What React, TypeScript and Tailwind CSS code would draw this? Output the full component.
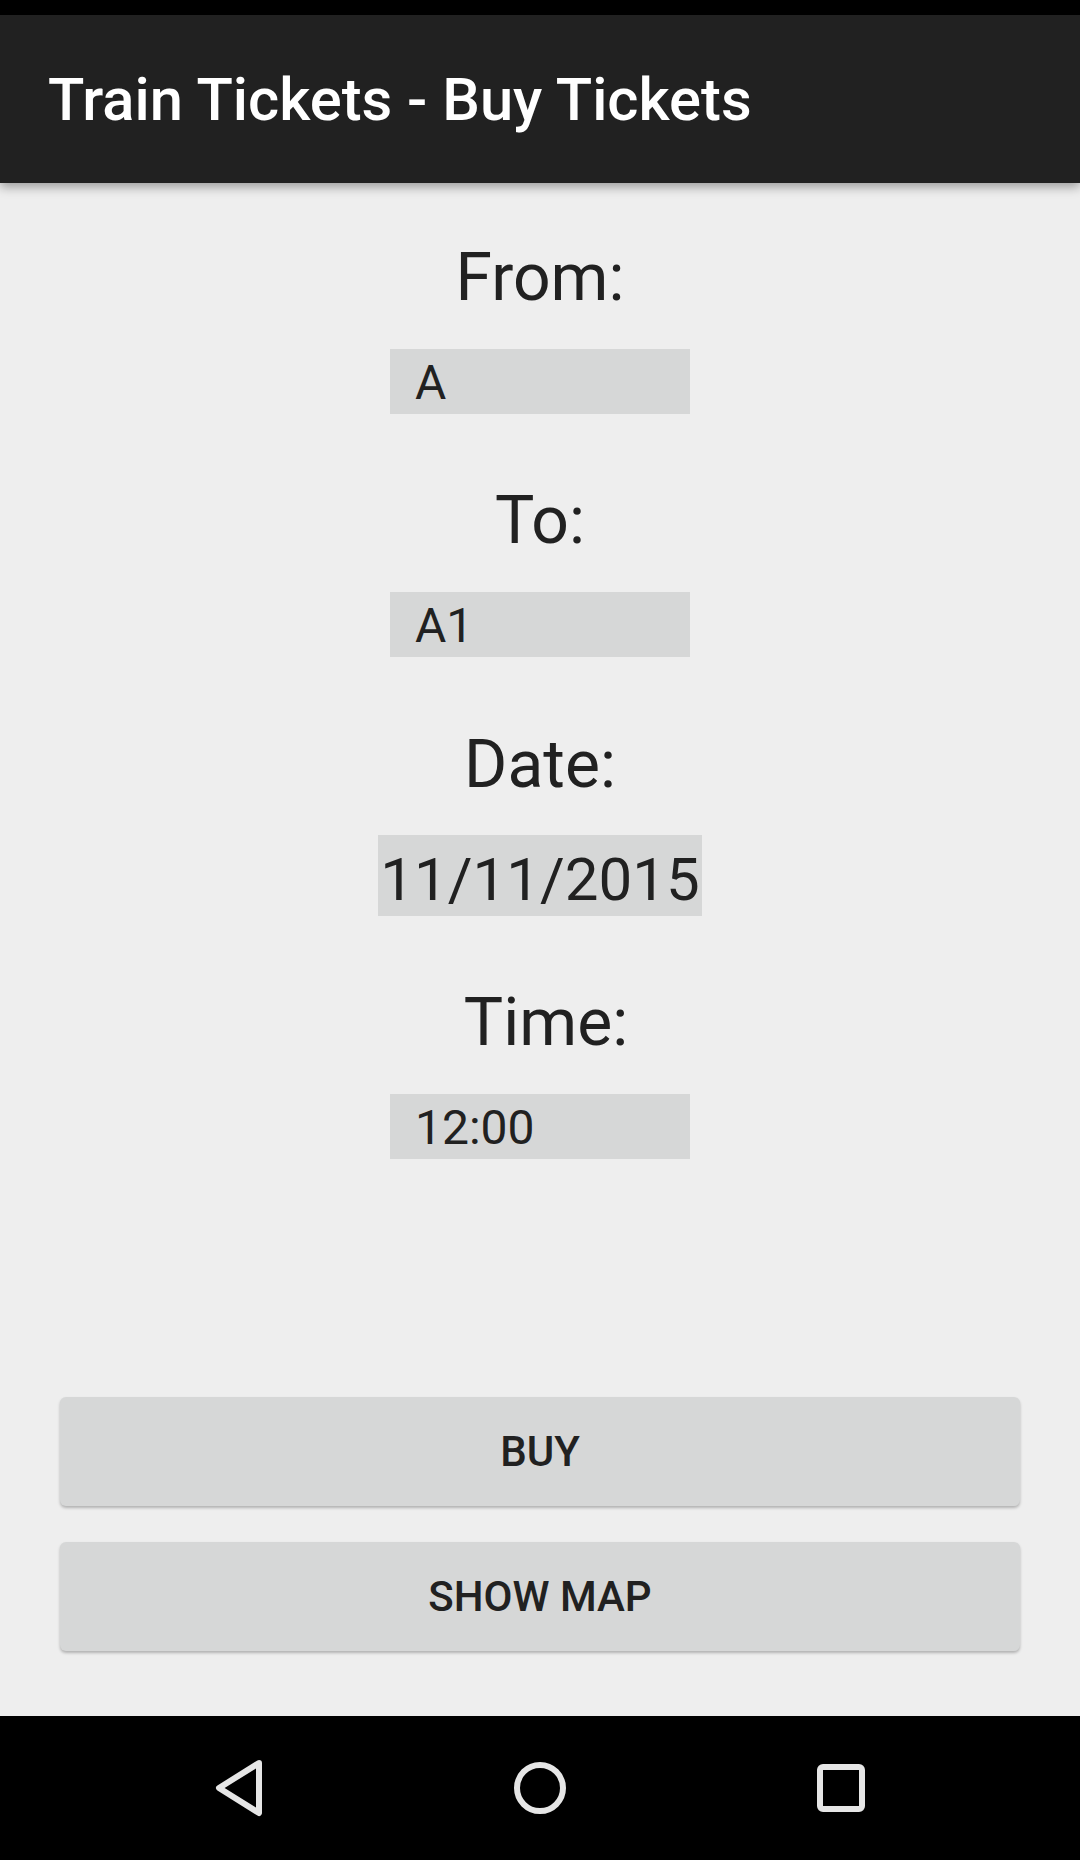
const fields = [
  { label: "From:", value: "A", first: true },
  { label: "To:", value: "A1" },
];

function Field({ label, value, first, shift }: { label: string; value: string; first?: boolean; shift?: boolean }) {
  return (
    <>
      <div
        className={
          (first ? "mt-[55px]" : "mt-[67px]") +
          (shift ? " ml-[12px]" : "") +
          " text-[66px] leading-[80px] text-[#212121]"
        }
      >
        {label}
      </div>
      <div className="mt-[31px] w-[300px] h-[65px] bg-[#d6d7d7] pl-[25px] pt-[3px] text-[48px] leading-[62px] text-[#212121]">
        {value}
      </div>
    </>
  );
}

export default function App() {
  return (
    <div className="w-[1080px] h-[1860px] bg-[#eeeeee] flex flex-col font-['Roboto',sans-serif] overflow-hidden">
      <div className="h-[15px] bg-black shrink-0"></div>
      <div className="relative z-10 h-[168px] shrink-0 bg-[#212121] flex items-center pl-[48px] shadow-[0_4px_10px_rgba(0,0,0,0.35)]">
        <span className="text-white text-[59.7px] font-medium translate-y-[2px]">Train Tickets - Buy Tickets</span>
      </div>

      <div className="flex-1 flex flex-col items-center">
        {fields.map((f) => (
          <Field key={f.label} label={f.label} value={f.value} first={f.first} />
        ))}

        <div className="mt-[68px] text-[66px] leading-[80px] text-[#212121]">Date:</div>
        <div className="mt-[30px] h-[81px] bg-[#d6d7d7] px-[2px] pt-[8px] text-[60px] leading-[73px] text-[#212121]">
          11/11/2015
        </div>

        <Field label="Time:" value="12:00" shift />
      </div>

      <div className="flex flex-col gap-[36px] px-[60px] pb-[65px] shrink-0">
        <button className="h-[109px] rounded-[6px] bg-[#d6d7d7] shadow-[0_2px_3px_rgba(0,0,0,0.25)] text-[42px] font-medium text-[#212121]">
          BUY
        </button>
        <button className="h-[109px] rounded-[6px] bg-[#d6d7d7] shadow-[0_2px_3px_rgba(0,0,0,0.25)] text-[42px] font-medium text-[#212121]">
          SHOW MAP
        </button>
      </div>

      <div className="h-[144px] shrink-0 bg-black flex items-center justify-center gap-[241px]">
        <svg width="60" height="60" viewBox="0 0 60 60">
          <polygon points="50,5 10,30 50,55" fill="none" stroke="#e6e6e6" strokeWidth="6" strokeLinejoin="round" />
        </svg>
        <svg width="60" height="60" viewBox="0 0 60 60">
          <circle cx="30" cy="30" r="23" fill="none" stroke="#e6e6e6" strokeWidth="6" />
        </svg>
        <svg width="60" height="60" viewBox="0 0 60 60">
          <rect x="9" y="9" width="42" height="42" rx="3" fill="none" stroke="#e6e6e6" strokeWidth="6" />
        </svg>
      </div>
    </div>
  );
}
